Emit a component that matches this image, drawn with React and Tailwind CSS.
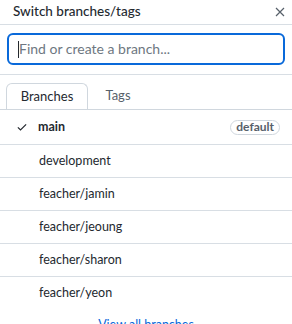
const branches = ["development", "feacher/jamin", "feacher/jeoung", "feacher/sharon", "feacher/yeon"];

export default function App() {
  return (
    <div className="w-[292px] h-[324px] overflow-hidden bg-white text-[#24292f] text-xs" style={{ fontFamily: 'Lato, "Noto Sans", sans-serif' }}>
      {/* header */}
      <div className="h-[25px] flex items-center justify-between pl-[13px] pr-[7px] border-b border-[#d8dee4]">
        <span className="text-[13.5px] font-medium">Switch branches/tags</span>
        <svg width="10" height="10" viewBox="0 0 10 10" className="text-[#57606a]">
          <path d="M1 1L9 9M9 1L1 9" stroke="currentColor" strokeWidth="1.2" />
        </svg>
      </div>

      {/* filter */}
      <div className="px-[7px] pt-[8px] pb-[9px] border-b border-[#d8dee4]">
        <div className="h-[32px] border-2 border-[#0969da] rounded-md flex items-center px-[9px]">
          <span className="w-px h-[17px] bg-[#24292f]" />
          <span className="text-[14px] text-[#6e7781]">Find or create a branch...</span>
        </div>
      </div>

      {/* tabs */}
      <div className="pt-[8px] pl-[6px] flex border-b border-[#d0d7de]">
        <div className="h-[26px] w-[82px] -mb-px bg-white border border-b-0 border-[#d0d7de] rounded-t-md flex items-center justify-center text-[13px] text-[#24292f]">
          Branches
        </div>
        <div className="h-[26px] w-[60px] flex items-center justify-center text-[13px] text-[#57606a]">Tags</div>
      </div>

      {/* rows */}
      <div className="h-[35px] flex items-center border-b border-[#d8dee4] pl-[16px] pr-[12px]">
        <svg width="12" height="12" viewBox="0 0 16 16" className="mr-[10px]">
          <path d="M2.5 8.5L6 12L13.5 4.5" fill="none" stroke="#24292f" strokeWidth="1.6" />
        </svg>
        <span className="font-bold text-[12.5px]">main</span>
        <span className="ml-auto h-[15px] px-[5px] rounded-full border border-[#d0d7de] text-[12px] font-bold text-[#57606a] flex items-center">default</span>
      </div>
      {branches.map((b, i) => (
        <div key={b} className={"h-[33px] flex items-center pl-[39px] text-[12.5px] " + (i < branches.length - 1 ? "border-b border-[#d8dee4]" : "")}>
          {b}
        </div>
      ))}
      <div className="text-center text-[#0969da] text-[12.5px] mt-[7px]">View all branches</div>
    </div>
  );
}
